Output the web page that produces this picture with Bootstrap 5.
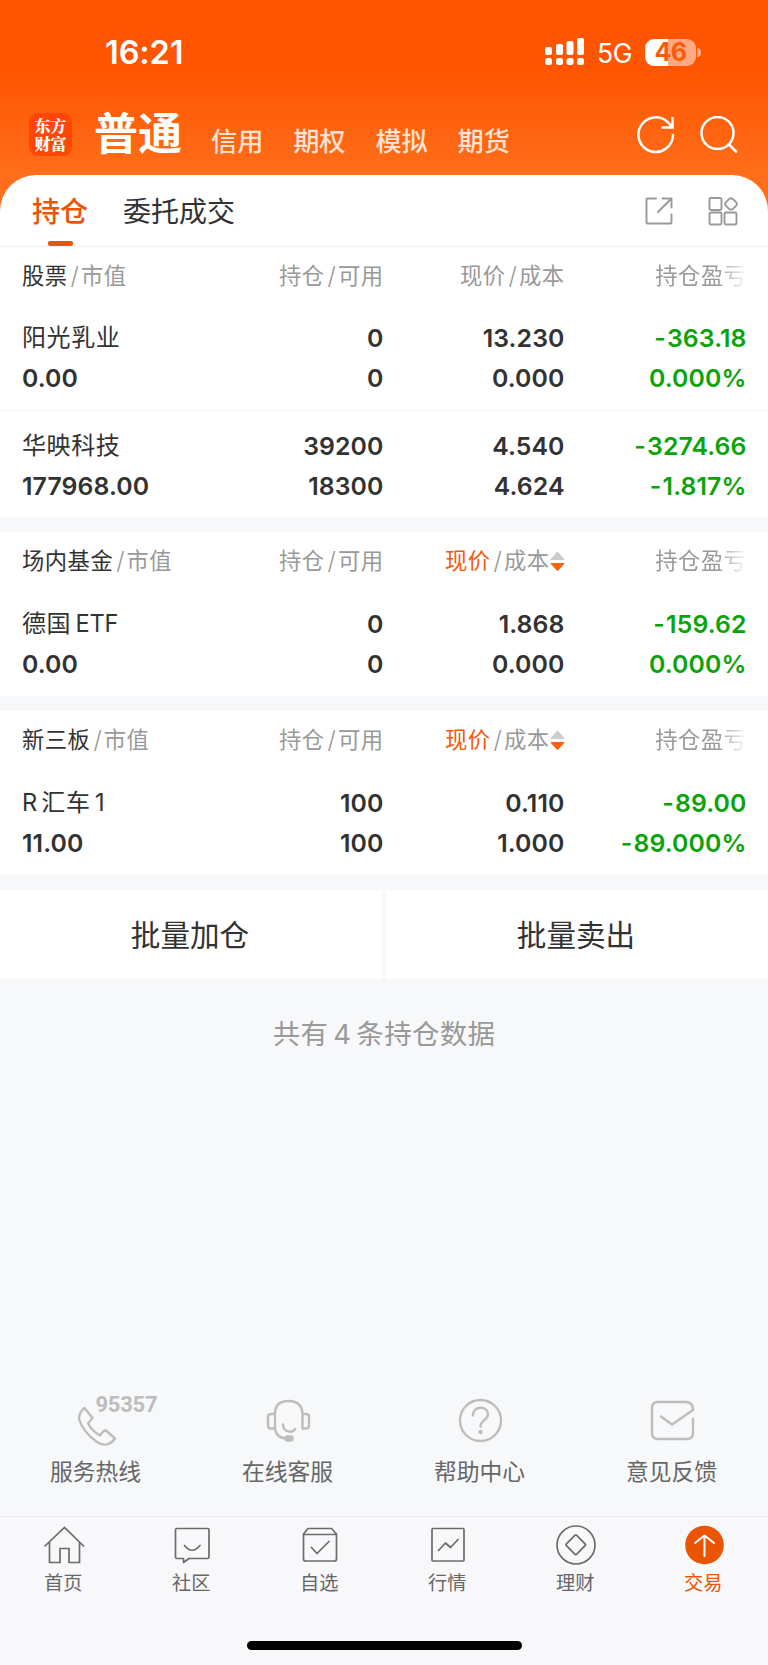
<!DOCTYPE html>
<html lang="zh-CN">
<head>
<meta charset="utf-8">
<meta name="viewport" content="width=device-width, initial-scale=1">
<title>持仓</title>
<link href="https://cdn.jsdelivr.net/npm/bootstrap@5.3.0/dist/css/bootstrap.min.css" rel="stylesheet">
<style>
  :root { --brand:#ea5504; --ink:#323232; --mute:#999; --page:#f7f8fa; --fall:#0aa30a; }
  body { font-family:Inter,"Noto Sans CJK SC",sans-serif; background:var(--page); color:var(--ink); line-height:1; }
  svg { display:block; flex:none; fill:none; stroke-linecap:round; stroke-linejoin:round; }
  .screen { width:768px; height:1665px; overflow:hidden; }
  .hero { height:215px; background:linear-gradient(#ff5500 70px,#ff6e1a 175px,#ff6e1a); color:#fff; }
  .statusbar { height:104px; padding:0 67px 0 105px; }
  .clock { font-size:32.5px; font-weight:600; letter-spacing:-.1px; padding-top:2px; }
  .net { font-size:26.5px; font-weight:400; letter-spacing:-.5px; margin:3px 13px 0 12px; }
  .battery { width:51px; height:27px; border-radius:9px; font-size:25px; font-weight:700; letter-spacing:-.6px; color:#ff5a08;
    background:linear-gradient(90deg,#fff 46%,#ffaa80 46%); }
  .battery-tip { width:4px; height:9px; margin-left:1px; border-radius:0 4px 4px 0; background:#ffaa80; }
  .mainnav { height:61px; padding:0 30px 0 29px; }
  .logo { width:43px; height:43px; border-radius:9px; background:#ff4606; font-family:"Noto Serif CJK SC","Noto Sans CJK SC",serif; font-size:16px; font-weight:900; line-height:17.5px; padding-top:4px; }
  .mode-now { font-size:44px; font-weight:700; line-height:44px; margin:-2px 0 0 22px; width:117px; }
  .mode { font-size:26.2px; font-weight:500; line-height:30px; width:82.2px; color:#ffe2d3; padding-top:14px; }
  .sheet { margin-top:-40px; background:#fff; border-radius:36px 36px 0 0; }
  .tabs { height:72px; padding:0 30px 0 32px; border-bottom:1px solid #f0f0f2; }
  .tab { font-size:28px; line-height:74px; height:71px; }
  .tab-on { color:var(--brand); font-weight:500; width:91px; position:relative; }
  .tab-on::after { content:""; position:absolute; left:16px; bottom:0; width:25px; height:5px; border-radius:2px; background:var(--brand); }
  .cells { display:grid; grid-template-columns:200px 161.5px 181px 182px; padding:0 22px; }
  .cells > div:not(:first-child) { text-align:right; }
  .heads { height:57px; font-size:22.3px; letter-spacing:.5px; line-height:58px; color:var(--mute); white-space:nowrap; }
  .tabs + .heads { height:56px; line-height:57px; }
  .heads > div { display:flex; }
  .heads > div:not(:first-child) { justify-content:flex-end; }
  .heads b { font-weight:400; color:var(--ink); }
  .heads i { font-style:normal; font-weight:300; font-size:24px; margin:0 1.5px 0 3px; }
  .heads .hot { color:#f55a0a; }
  .fade-end { -webkit-mask-image:linear-gradient(90deg,#000 68%,transparent 101%); mask-image:linear-gradient(90deg,#000 68%,transparent 101%); }
  .holding { height:107px; padding-top:15px; font-size:24.8px; font-weight:600; line-height:40px; letter-spacing:.1px; }
  .holding .name { display:block; height:40px; font-weight:400; font-size:24px; letter-spacing:.6px; word-spacing:-3px; }
  .holding + .holding { border-top:1px solid #f1f1f3; }
  .latin { font-size:23.6px; letter-spacing:-.2px; }
  .down { color:var(--fall); }
  .dash { letter-spacing:1.2px; }
  .gap-band { height:15px; background:var(--page); }
  .batch { height:89px; gap:4px; background:var(--page); font-size:29.6px; }
  .batch > div { background:#fff; width:382px; line-height:91px; text-align:center; padding-right:2px; }
  .total { font-size:27.5px; line-height:40px; margin-top:35px; color:var(--mute); word-spacing:-3px; letter-spacing:.3px; }
  .help { margin-top:341px; font-size:22.8px; line-height:33px; color:#666; }
  .help span { margin-right:1px; }
  .help svg { stroke:#bdbdbd; stroke-width:2.4; width:86px; height:60px; overflow:visible; }
  .help svg text { font:700 22px "Roboto",sans-serif; fill:#bdbdbd; stroke:none; }
  .tabbar { margin-top:28px; height:149px; background:#f8f8fb; border-top:1px solid #eaeaec; font-size:19.2px; color:#666; padding-top:7px; }
  .tabbar span { margin:8px 1.5px 0 0; }
  .tabbar svg { width:44px; height:42px; stroke:#6b6b6b; stroke-width:1.7; }
  .homebar { width:275px; height:9px; border-radius:5px; background:#000; margin:48px auto 0; }
</style>
</head>
<body>
<svg width="0" height="0" class="position-absolute">
  <symbol id="sort" viewBox="0 0 14 20"><path d="M7 1 13 8H1z" fill="#ccc" stroke="#ccc"/><path d="M7 18.500 13 12H1z" fill="#ff6010" stroke="#ff6010"/></symbol>
</svg>
<main class="screen">
  <header class="hero">
    <div class="statusbar d-flex align-items-center">
      <span class="clock">16:21</span>
      <svg class="ms-auto" width="40" height="28"><g fill="#fff"><rect x="0" y="9" width="7" height="8" rx="2"/><rect x="11" y="6" width="7" height="11" rx="2"/><rect x="21.500" y="3" width="7" height="14" rx="2"/><rect x="32" y="0" width="7" height="17" rx="2"/><rect x="0" y="20" width="7" height="7" rx="2.500"/><rect x="11" y="20" width="7" height="7" rx="2.500"/><rect x="21.500" y="20" width="7" height="7" rx="2.500"/><rect x="32" y="20" width="7" height="7" rx="2.500"/></g></svg>
      <span class="net">5G</span>
      <span class="battery d-flex align-items-center justify-content-center">46</span><span class="battery-tip"></span>
    </div>
    <nav class="mainnav d-flex align-items-center">
      <div class="logo text-center">东方<br>财富</div>
      <div class="mode-now">普通</div>
      <div class="mode">信用</div><div class="mode">期权</div><div class="mode">模拟</div><div class="mode">期货</div>
      <svg class="ms-auto" width="38" height="38" stroke="#fff" stroke-width="2.500"><path d="M36 19A17.300 17.300 0 1 1 31.500 7L34.500 10.500"/><path d="M35.500 1V11.500H24.500" stroke-linecap="butt" stroke-linejoin="miter"/></svg>
      <svg style="margin-left:25px" width="38" height="38" stroke="#fff" stroke-width="2.500"><circle cx="17.500" cy="17" r="16"/><path d="m28.500 28 7.500 7.500"/></svg>
    </nav>
  </header>

  <section class="sheet">
    <div class="tabs d-flex align-items-center">
      <div class="tab tab-on">持仓</div><div class="tab">委托成交</div>
      <svg class="ms-auto" width="28" height="28" stroke="#999" stroke-width="1.900"><path d="M11 1.500H2.500Q1.500 1.500 1.500 2.500V25.500Q1.500 26.500 2.500 26.500H25.500Q26.500 26.500 26.500 25.500V17.500M17.500 1.500H26.500V10.500M26.500 1.500 13 15"/></svg>
      <svg style="margin-left:35px" width="30" height="30" stroke="#999" stroke-width="1.900"><rect x="1.500" y="2" width="12" height="12" rx="1.500"/><rect x="1.500" y="16.500" width="12" height="12" rx="1.500"/><rect x="16.500" y="16.500" width="12" height="12" rx="1.500"/><path d="M21 3.200Q23 1.500 25 3.200L28 6.200Q29.800 8 28 9.800L25 12.800Q23 14.500 21 12.800L18 9.800Q16.200 8 18 6.200z"/></svg>
    </div>

    <div class="cells heads"><div><b>股票</b><i>/</i>市值</div><div>持仓<i>/</i>可用</div><div>现价<i>/</i>成本</div><div><span class="fade-end">持仓盈亏</span></div></div>
    <div class="cells holding"><div><span class="name">阳光乳业</span>0.00</div><div>0<br>0</div><div>13.230<br>0.000</div><div class="down"><span class="dash">-</span>363.18<br>0.000%</div></div>
    <div class="cells holding"><div><span class="name">华映科技</span>177968.00</div><div>39200<br>18300</div><div>4.540<br>4.624</div><div class="down"><span class="dash">-</span>3274.66<br><span class="dash">-</span>1.817%</div></div>
    <div class="gap-band"></div>

    <div class="cells heads"><div><b>场内基金</b><i>/</i>市值</div><div>持仓<i>/</i>可用</div><div class="align-items-center"><span class="hot">现价</span><i>/</i>成本<svg class="me-n1" width="15" height="21"><use href="#sort"/></svg></div><div><span class="fade-end">持仓盈亏</span></div></div>
    <div class="cells holding"><div><span class="name">德国 <span class="latin">ETF</span></span>0.00</div><div>0<br>0</div><div>1.868<br>0.000</div><div class="down"><span class="dash">-</span>159.62<br>0.000%</div></div>
    <div class="gap-band"></div>

    <div class="cells heads"><div><b>新三板</b><i>/</i>市值</div><div>持仓<i>/</i>可用</div><div class="align-items-center"><span class="hot">现价</span><i>/</i>成本<svg class="me-n1" width="15" height="21"><use href="#sort"/></svg></div><div><span class="fade-end">持仓盈亏</span></div></div>
    <div class="cells holding"><div><span class="name"><span class="latin">R</span> 汇车 <span class="latin">1</span></span>11.00</div><div>100<br>100</div><div>0.110<br>1.000</div><div class="down"><span class="dash">-</span>89.00<br><span class="dash">-</span>89.000%</div></div>
    <div class="gap-band"></div>
    <div class="batch d-flex"><div>批量加仓</div><div>批量卖出</div></div>
  </section>

  <p class="total text-center mb-0">共有 4 条持仓数据</p>

  <section class="help row g-0 text-center">
    <div class="col-3 d-flex flex-column align-items-center"><svg viewBox="53 1396 86 60"><path d="M84.500 1409Q79 1413 79 1420Q83 1433 97 1443Q103 1447 108 1445Q112 1444 115 1439.500L106 1431.500Q103 1431.500 100 1436.500Q92 1432 88 1424.500L92.500 1419z"/><text x="95.500" y="1412.500" textLength="62">95357</text></svg><span>服务热线</span></div>
    <div class="col-3 d-flex flex-column align-items-center"><svg viewBox="245 1396 86 60"><path d="M275 1430V1415Q275 1402 288.500 1402T302.500 1415V1429.500H306Q309 1429.500 309 1426.500V1418Q309 1415 306 1415H302.500M275 1415H271Q268 1415 268 1418V1426.500Q268 1429.500 271 1429.500H275Q276 1439 287 1439.500M283 1425.500C283.500 1434 293 1434 295 1430"/><rect x="285.500" y="1437.500" width="7" height="4" rx="2" fill="#bdbdbd"/></svg><span>在线客服</span></div>
    <div class="col-3 d-flex flex-column align-items-center"><svg viewBox="437 1396 86 60"><circle cx="480.500" cy="1421.500" r="20.500"/><path d="M473 1416.500C473 1406 488 1406.500 488 1415.500C488 1420.500 480.500 1421.500 480.500 1427.500"/><circle cx="480.500" cy="1433" r="1" fill="#bdbdbd"/></svg><span>帮助中心</span></div>
    <div class="col-3 d-flex flex-column align-items-center"><svg viewBox="629 1396 86 60"><path d="M693 1420V1434Q693 1440 687 1440H658Q652 1440 652 1434V1409Q652 1403 658 1403H686Q693 1403 693 1411L672 1425.500 661 1417.500"/></svg><span>意见反馈</span></div>
  </section>

  <nav class="tabbar">
    <div class="row g-0">
      <div class="col-2 d-flex flex-column align-items-center"><svg viewBox="42 1524 44 42"><path d="M45 1546 64.500 1527.500 83.500 1546M49.500 1542.500V1562.500H60V1548.500H69V1562.500H79.500V1542.500" stroke-linejoin="miter"/></svg><span>首页</span></div>
      <div class="col-2 d-flex flex-column align-items-center"><svg viewBox="170 1524 44 42"><path d="M177 1528.500H207.500Q209 1528.500 209 1530V1557Q209 1558.500 207.500 1558.500H189L183.500 1562.500V1558.500H177Q175.500 1558.500 175.500 1557V1530Q175.500 1528.500 177 1528.500zM184.500 1545.500Q192 1555 200 1545.500"/></svg><span>社区</span></div>
      <div class="col-2 d-flex flex-column align-items-center"><svg viewBox="298 1524 44 42"><path d="M303.500 1534 308 1528.500H331.500L336.500 1534V1559Q336.500 1561 334.500 1561H305.500Q303.500 1561 303.500 1559zM304 1534.500H336M311.500 1547.500 317 1553.500 329 1541.500"/></svg><span>自选</span></div>
      <div class="col-2 d-flex flex-column align-items-center"><svg viewBox="426 1524 44 42"><rect x="432" y="1528.500" width="32" height="32.500" rx="1"/><path d="M438.500 1550.500 445.500 1543 450.500 1547.500 458 1539.500"/></svg><span>行情</span></div>
      <div class="col-2 d-flex flex-column align-items-center"><svg viewBox="554 1524 44 42"><circle cx="576" cy="1545" r="19"/><rect x="568.500" y="1537.500" width="14.500" height="14.500" rx="1" transform="rotate(45 575.750 1544.750)"/></svg><span>理财</span></div>
      <div class="col-2 d-flex flex-column align-items-center" style="color:#ea5504"><svg viewBox="682 1524 44 42"><circle cx="704.500" cy="1545" r="19.300" fill="#ea5504" stroke="none"/><path d="M704.500 1556V1535.500M695 1543 704.500 1535.500 714 1543" stroke="#fff" stroke-width="2"/></svg><span>交易</span></div>
    </div>
    <div class="homebar"></div>
  </nav>
</main>
<script src="https://cdn.jsdelivr.net/npm/bootstrap@5.3.0/dist/js/bootstrap.bundle.min.js"></script>
</body>
</html>
